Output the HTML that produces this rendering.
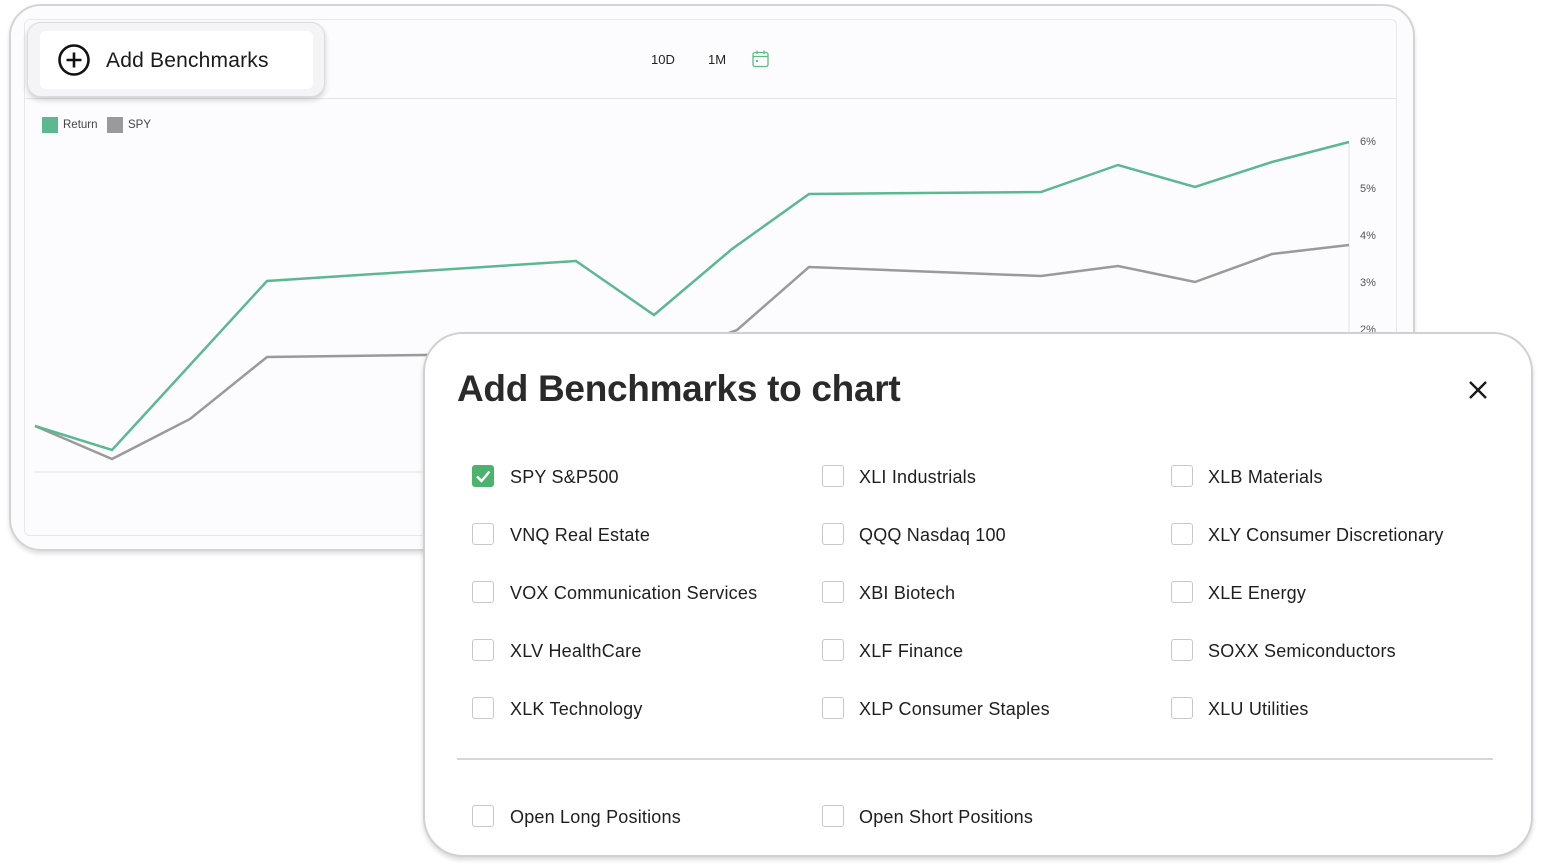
<!DOCTYPE html>
<html><head><style>
*{box-sizing:border-box;margin:0;padding:0}
body{width:1542px;height:868px;background:#fff;position:relative;overflow:hidden;font-family:"Liberation Sans",sans-serif;color:#222}
.card{position:absolute;left:9px;top:4px;width:1406px;height:547px;border:2px solid #d4d4d6;border-radius:32px;background:#fcfcfe;box-shadow:0 3px 4px rgba(0,0,0,.12)}
.panel{position:absolute;left:24px;top:19px;width:1373px;height:517px;border:1px solid #e8e8ec;border-radius:6px;background:#fcfcfe}
.hsep{position:absolute;left:24px;top:98px;width:1373px;height:1px;background:#e6e6ea}
.btnout{position:absolute;left:27px;top:22px;width:298px;height:75px;border-radius:14px;background:#f4f4f6;border:1px solid #dcdcdf;box-shadow:0 3px 6px rgba(0,0,0,.18)}
.btnin{position:absolute;left:40px;top:31px;width:273px;height:58px;border-radius:6px;background:#fff}
.modal{position:absolute;left:423px;top:332px;width:1110px;height:525px;border:2px solid #d0d0d2;border-radius:40px;background:#fff;box-shadow:0 3px 5px rgba(0,0,0,.15)}
.cb{position:absolute;width:22px;height:22px;border:1.5px solid #c8c8cc;border-radius:3px;background:#fff}
.lb{position:absolute;font-size:18px;color:#1e1e1e;line-height:22px;letter-spacing:.2px}
.ax{position:absolute;left:1360px;font-size:11px;color:#555}
</style></head><body>
<div class="card"></div>
<div class="panel"></div>
<div class="hsep"></div>
<div class="btnout"></div>
<div class="btnin"></div>
<svg style="position:absolute;left:57px;top:43px" width="34" height="34" viewBox="0 0 34 34"><circle cx="17" cy="17" r="14.5" fill="none" stroke="#111" stroke-width="2.6"/><path d="M17 9.5V24.5M9.5 17H24.5" stroke="#111" stroke-width="2.6"/></svg>
<div style="position:absolute;left:106px;top:49px;font-size:21px;color:#1a1a1a;letter-spacing:.2px">Add Benchmarks</div>
<div style="position:absolute;left:651px;top:52px;font-size:13px;color:#222">10D</div>
<div style="position:absolute;left:708px;top:52px;font-size:13px;color:#222">1M</div>
<svg style="position:absolute;left:751px;top:49px" width="19" height="19" viewBox="0 0 19 19" fill="none" stroke="#5cbd82" stroke-width="1.3"><rect x="2" y="3.5" width="15" height="14" rx="2"/><path d="M2 7.5H17M6 1.5V5M13 1.5V5"/><rect x="5" y="11" width="2" height="2" fill="#5cbd82" stroke="none"/></svg>
<div style="position:absolute;left:42px;top:117px;width:16px;height:16px;background:#5cb891"></div>
<div style="position:absolute;left:63px;top:119px;font-size:11.5px;color:#444">Return</div>
<div style="position:absolute;left:107px;top:117px;width:16px;height:16px;background:#9a9a9a"></div>
<div style="position:absolute;left:128px;top:119px;font-size:11.5px;color:#444">SPY</div>
<svg style="position:absolute;left:0;top:0" width="1542" height="868">
<line x1="35" y1="472" x2="1349" y2="472" stroke="#e2e2e6"/>
<line x1="1349" y1="142" x2="1349" y2="472" stroke="#e2e2e6"/>
<polyline fill="none" stroke="#9a9a9a" stroke-width="2.5" points="35,426 112,459 190,419 267,357 424,355 576,350 654,360 737,330 809,267 1041,276 1118,266 1195,282 1272,254 1349,245"/>
<polyline fill="none" stroke="#5cb891" stroke-width="2.5" points="35,426 112,450 267,281 576,261 654,315 732,249 809,194 1041,192 1118,165 1195,187 1272,162 1349,142"/>
</svg>
<div class="ax" style="top:136px">6%</div>
<div class="ax" style="top:183px">5%</div>
<div class="ax" style="top:230px">4%</div>
<div class="ax" style="top:277px">3%</div>
<div class="ax" style="top:324px">2%</div>
<div class="modal"></div>
<div style="position:absolute;left:457px;top:368px;font-size:37px;font-weight:bold;color:#2a2a2a;letter-spacing:-.3px">Add Benchmarks to chart</div>
<svg style="position:absolute;left:1467px;top:379px" width="22" height="22" viewBox="0 0 22 22"><path d="M3 3L19 19M19 3L3 19" stroke="#1a1a1a" stroke-width="2.4"/></svg>
<div class="cb" style="left:472px;top:465px;background:#4bb36c;border-color:#4bb36c"></div>
<svg style="position:absolute;left:472px;top:465px" width="22" height="22"><path d="M5 11.5L9.5 16L17.5 6.5" fill="none" stroke="#fff" stroke-width="2.4"/></svg>
<div class="lb" style="left:510px;top:466px">SPY S&amp;P500</div>
<div class="cb" style="left:822px;top:465px"></div><div class="lb" style="left:859px;top:466px">XLI Industrials</div>
<div class="cb" style="left:1171px;top:465px"></div><div class="lb" style="left:1208px;top:466px">XLB Materials</div>
<div class="cb" style="left:472px;top:523px"></div><div class="lb" style="left:510px;top:524px">VNQ Real Estate</div>
<div class="cb" style="left:822px;top:523px"></div><div class="lb" style="left:859px;top:524px">QQQ Nasdaq 100</div>
<div class="cb" style="left:1171px;top:523px"></div><div class="lb" style="left:1208px;top:524px">XLY Consumer Discretionary</div>
<div class="cb" style="left:472px;top:581px"></div><div class="lb" style="left:510px;top:582px">VOX Communication Services</div>
<div class="cb" style="left:822px;top:581px"></div><div class="lb" style="left:859px;top:582px">XBI Biotech</div>
<div class="cb" style="left:1171px;top:581px"></div><div class="lb" style="left:1208px;top:582px">XLE Energy</div>
<div class="cb" style="left:472px;top:639px"></div><div class="lb" style="left:510px;top:640px">XLV HealthCare</div>
<div class="cb" style="left:822px;top:639px"></div><div class="lb" style="left:859px;top:640px">XLF Finance</div>
<div class="cb" style="left:1171px;top:639px"></div><div class="lb" style="left:1208px;top:640px">SOXX Semiconductors</div>
<div class="cb" style="left:472px;top:697px"></div><div class="lb" style="left:510px;top:698px">XLK Technology</div>
<div class="cb" style="left:822px;top:697px"></div><div class="lb" style="left:859px;top:698px">XLP Consumer Staples</div>
<div class="cb" style="left:1171px;top:697px"></div><div class="lb" style="left:1208px;top:698px">XLU Utilities</div>
<div style="position:absolute;left:457px;top:758px;width:1036px;height:1.5px;background:#d6d6d8"></div>
<div class="cb" style="left:472px;top:805px"></div><div class="lb" style="left:510px;top:806px">Open Long Positions</div>
<div class="cb" style="left:822px;top:805px"></div><div class="lb" style="left:859px;top:806px">Open Short Positions</div>
</body></html>
